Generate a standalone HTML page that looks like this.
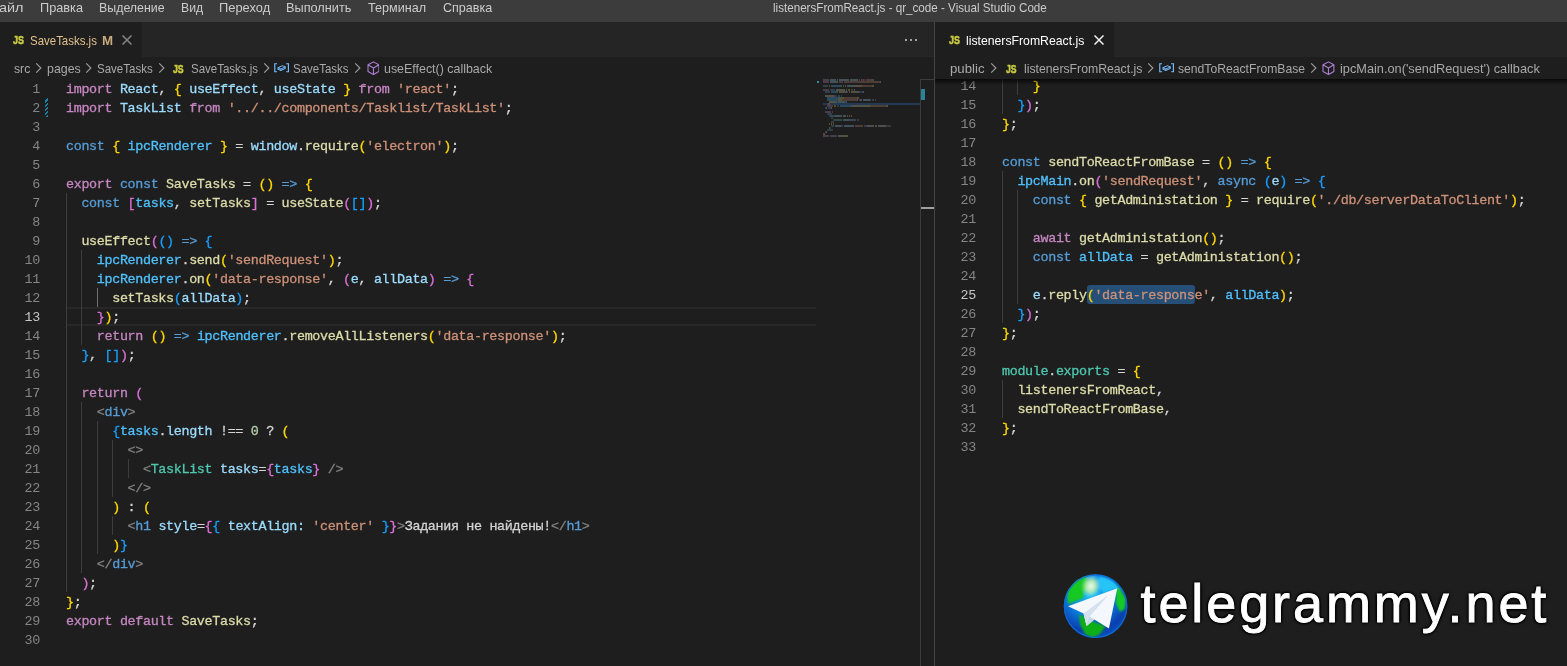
<!DOCTYPE html>
<html><head><meta charset="utf-8"><title>vscode</title>
<style>
html,body{margin:0;padding:0;background:#1e1e1e;}
body{width:1567px;height:666px;position:relative;overflow:hidden;font-family:"Liberation Sans",sans-serif;}
.abs{position:absolute;}
.ui{position:absolute;white-space:pre;font-family:"Liberation Sans",sans-serif;font-size:13px;line-height:16px;color:#ccc;}
.code{position:absolute;white-space:pre;-webkit-text-stroke:0.3px;padding-top:1px;font-family:"Liberation Mono",monospace;font-size:13.4px;letter-spacing:-0.34px;line-height:19px;height:19px;color:#d4d4d4;}
.ln{position:absolute;white-space:pre;padding-top:1px;font-family:"Liberation Mono",monospace;font-size:13.4px;letter-spacing:-0.34px;line-height:19px;height:19px;color:#858585;text-align:right;}
.g{position:absolute;width:1px;background:#3d3d3d;}
.ga{position:absolute;width:1px;background:#707070;}
</style></head><body>
<div id="root" style="position:absolute;left:0;top:0;width:1567px;height:666px;will-change:transform;">


<!-- title bar -->
<div class="abs" style="left:0;top:0;width:1567px;height:22px;background:#3c3c3c;"></div>
<!-- left tab strip -->
<div class="abs" style="left:0;top:22px;width:934px;height:35px;background:#252526;"></div>
<div class="abs" style="left:0;top:22px;width:142px;height:35px;background:#1e1e1e;"></div>
<!-- pane divider -->
<div class="abs" style="left:934px;top:22px;width:1px;height:644px;background:#444444;"></div>
<!-- right tab strip -->
<div class="abs" style="left:935px;top:22px;width:632px;height:35px;background:#252526;"></div>
<div class="abs" style="left:935px;top:22px;width:179px;height:35px;background:#1e1e1e;"></div>

<div class="abs" style="left:66px;top:307px;width:750px;height:15px;border-top:2px solid #282828;border-bottom:2px solid #282828"></div>
<div class="g" style="left:66.0px;top:193px;height:399px"></div>
<div class="g" style="left:81.4px;top:250px;height:95px"></div>
<div class="g" style="left:81.4px;top:402px;height:171px"></div>
<div class="ga" style="left:96.8px;top:288px;height:19px"></div>
<div class="g" style="left:96.8px;top:421px;height:133px"></div>
<div class="g" style="left:112.2px;top:440px;height:57px"></div>
<div class="g" style="left:112.2px;top:516px;height:19px"></div>
<div class="g" style="left:127.6px;top:459px;height:19px"></div>
<div class="g" style="left:1002.0px;top:76px;height:38px"></div>
<div class="g" style="left:1017.4px;top:76px;height:19px"></div>
<div class="g" style="left:1002.0px;top:171px;height:152px"></div>
<div class="g" style="left:1017.4px;top:190px;height:114px"></div>
<div class="g" style="left:1002.0px;top:380px;height:38px"></div>
<div class="abs" style="left:45px;top:98px;width:3px;height:19px;background:repeating-linear-gradient(-45deg,#1b81a8 0 1.5px,#1e1e1e 1.5px 3px)"></div>
<div class="abs" style="left:1087px;top:285px;width:108px;height:19px;background:#264f78;border-radius:3px"></div>
<!-- left code -->
<div class="ln" style="left:0px;top:79px;width:40px;color:#858585">1</div>
<div class="code" style="left:66px;top:79px"><span style="color:#c586c0">import</span> <span style="color:#9cdcfe">React</span><span style="color:#d4d4d4">, </span><span style="color:#ffd700">{</span> <span style="color:#9cdcfe">useEffect</span><span style="color:#d4d4d4">, </span><span style="color:#9cdcfe">useState</span> <span style="color:#ffd700">}</span> <span style="color:#c586c0">from</span> <span style="color:#ce9178">&#x27;react&#x27;</span><span style="color:#d4d4d4">;</span></div>
<div class="ln" style="left:0px;top:98px;width:40px;color:#858585">2</div>
<div class="code" style="left:66px;top:98px"><span style="color:#c586c0">import</span> <span style="color:#9cdcfe">TaskList</span> <span style="color:#c586c0">from</span> <span style="color:#ce9178">&#x27;../../components/Tasklist/TaskList&#x27;</span><span style="color:#d4d4d4">;</span></div>
<div class="ln" style="left:0px;top:117px;width:40px;color:#858585">3</div>
<div class="ln" style="left:0px;top:136px;width:40px;color:#858585">4</div>
<div class="code" style="left:66px;top:136px"><span style="color:#569cd6">const</span> <span style="color:#ffd700">{</span> <span style="color:#4fc1ff">ipcRenderer</span> <span style="color:#ffd700">}</span><span style="color:#d4d4d4"> = </span><span style="color:#9cdcfe">window</span><span style="color:#d4d4d4">.</span><span style="color:#dcdcaa">require</span><span style="color:#ffd700">(</span><span style="color:#ce9178">&#x27;electron&#x27;</span><span style="color:#ffd700">)</span><span style="color:#d4d4d4">;</span></div>
<div class="ln" style="left:0px;top:155px;width:40px;color:#858585">5</div>
<div class="ln" style="left:0px;top:174px;width:40px;color:#858585">6</div>
<div class="code" style="left:66px;top:174px"><span style="color:#c586c0">export</span> <span style="color:#569cd6">const</span> <span style="color:#dcdcaa">SaveTasks</span><span style="color:#d4d4d4"> = </span><span style="color:#ffd700">()</span> <span style="color:#569cd6">=&gt;</span> <span style="color:#ffd700">{</span></div>
<div class="ln" style="left:0px;top:193px;width:40px;color:#858585">7</div>
<div class="code" style="left:66px;top:193px">  <span style="color:#569cd6">const</span> <span style="color:#da70d6">[</span><span style="color:#4fc1ff">tasks</span><span style="color:#d4d4d4">, </span><span style="color:#dcdcaa">setTasks</span><span style="color:#da70d6">]</span><span style="color:#d4d4d4"> = </span><span style="color:#dcdcaa">useState</span><span style="color:#da70d6">(</span><span style="color:#179fff">[]</span><span style="color:#da70d6">)</span><span style="color:#d4d4d4">;</span></div>
<div class="ln" style="left:0px;top:212px;width:40px;color:#858585">8</div>
<div class="ln" style="left:0px;top:231px;width:40px;color:#858585">9</div>
<div class="code" style="left:66px;top:231px">  <span style="color:#dcdcaa">useEffect</span><span style="color:#da70d6">(</span><span style="color:#179fff">()</span> <span style="color:#569cd6">=&gt;</span> <span style="color:#179fff">{</span></div>
<div class="ln" style="left:0px;top:250px;width:40px;color:#858585">10</div>
<div class="code" style="left:66px;top:250px">    <span style="color:#4fc1ff">ipcRenderer</span><span style="color:#d4d4d4">.</span><span style="color:#dcdcaa">send</span><span style="color:#ffd700">(</span><span style="color:#ce9178">&#x27;sendRequest&#x27;</span><span style="color:#ffd700">)</span><span style="color:#d4d4d4">;</span></div>
<div class="ln" style="left:0px;top:269px;width:40px;color:#858585">11</div>
<div class="code" style="left:66px;top:269px">    <span style="color:#4fc1ff">ipcRenderer</span><span style="color:#d4d4d4">.</span><span style="color:#dcdcaa">on</span><span style="color:#ffd700">(</span><span style="color:#ce9178">&#x27;data-response&#x27;</span><span style="color:#d4d4d4">, </span><span style="color:#da70d6">(</span><span style="color:#9cdcfe">e</span><span style="color:#d4d4d4">, </span><span style="color:#9cdcfe">allData</span><span style="color:#da70d6">)</span> <span style="color:#569cd6">=&gt;</span> <span style="color:#da70d6">{</span></div>
<div class="ln" style="left:0px;top:288px;width:40px;color:#858585">12</div>
<div class="code" style="left:66px;top:288px">      <span style="color:#dcdcaa">setTasks</span><span style="color:#179fff">(</span><span style="color:#9cdcfe">allData</span><span style="color:#179fff">)</span><span style="color:#d4d4d4">;</span></div>
<div class="ln" style="left:0px;top:307px;width:40px;color:#c6c6c6">13</div>
<div class="code" style="left:66px;top:307px">    <span style="color:#da70d6">}</span><span style="color:#ffd700">)</span><span style="color:#d4d4d4">;</span></div>
<div class="ln" style="left:0px;top:326px;width:40px;color:#858585">14</div>
<div class="code" style="left:66px;top:326px">    <span style="color:#c586c0">return</span> <span style="color:#ffd700">()</span> <span style="color:#569cd6">=&gt;</span> <span style="color:#4fc1ff">ipcRenderer</span><span style="color:#d4d4d4">.</span><span style="color:#dcdcaa">removeAllListeners</span><span style="color:#ffd700">(</span><span style="color:#ce9178">&#x27;data-response&#x27;</span><span style="color:#ffd700">)</span><span style="color:#d4d4d4">;</span></div>
<div class="ln" style="left:0px;top:345px;width:40px;color:#858585">15</div>
<div class="code" style="left:66px;top:345px">  <span style="color:#179fff">}</span><span style="color:#d4d4d4">, </span><span style="color:#179fff">[]</span><span style="color:#da70d6">)</span><span style="color:#d4d4d4">;</span></div>
<div class="ln" style="left:0px;top:364px;width:40px;color:#858585">16</div>
<div class="ln" style="left:0px;top:383px;width:40px;color:#858585">17</div>
<div class="code" style="left:66px;top:383px">  <span style="color:#c586c0">return</span> <span style="color:#da70d6">(</span></div>
<div class="ln" style="left:0px;top:402px;width:40px;color:#858585">18</div>
<div class="code" style="left:66px;top:402px">    <span style="color:#808080">&lt;</span><span style="color:#569cd6">div</span><span style="color:#808080">&gt;</span></div>
<div class="ln" style="left:0px;top:421px;width:40px;color:#858585">19</div>
<div class="code" style="left:66px;top:421px">      <span style="color:#179fff">{</span><span style="color:#4fc1ff">tasks</span><span style="color:#d4d4d4">.</span><span style="color:#9cdcfe">length</span><span style="color:#d4d4d4"> !== </span><span style="color:#b5cea8">0</span><span style="color:#d4d4d4"> ? </span><span style="color:#ffd700">(</span></div>
<div class="ln" style="left:0px;top:440px;width:40px;color:#858585">20</div>
<div class="code" style="left:66px;top:440px">        <span style="color:#808080">&lt;&gt;</span></div>
<div class="ln" style="left:0px;top:459px;width:40px;color:#858585">21</div>
<div class="code" style="left:66px;top:459px">          <span style="color:#808080">&lt;</span><span style="color:#4ec9b0">TaskList</span> <span style="color:#9cdcfe">tasks</span><span style="color:#d4d4d4">=</span><span style="color:#da70d6">{</span><span style="color:#4fc1ff">tasks</span><span style="color:#da70d6">}</span> <span style="color:#808080">/&gt;</span></div>
<div class="ln" style="left:0px;top:478px;width:40px;color:#858585">22</div>
<div class="code" style="left:66px;top:478px">        <span style="color:#808080">&lt;/&gt;</span></div>
<div class="ln" style="left:0px;top:497px;width:40px;color:#858585">23</div>
<div class="code" style="left:66px;top:497px">      <span style="color:#ffd700">)</span><span style="color:#d4d4d4"> : </span><span style="color:#ffd700">(</span></div>
<div class="ln" style="left:0px;top:516px;width:40px;color:#858585">24</div>
<div class="code" style="left:66px;top:516px">        <span style="color:#808080">&lt;</span><span style="color:#569cd6">h1</span> <span style="color:#9cdcfe">style</span><span style="color:#d4d4d4">=</span><span style="color:#da70d6">{</span><span style="color:#179fff">{</span> <span style="color:#9cdcfe">textAlign</span><span style="color:#9cdcfe">:</span> <span style="color:#ce9178">&#x27;center&#x27;</span> <span style="color:#179fff">}</span><span style="color:#da70d6">}</span><span style="color:#808080">&gt;</span><span style="color:#d4d4d4">Задания не найдены!</span><span style="color:#808080">&lt;/</span><span style="color:#569cd6">h1</span><span style="color:#808080">&gt;</span></div>
<div class="ln" style="left:0px;top:535px;width:40px;color:#858585">25</div>
<div class="code" style="left:66px;top:535px">      <span style="color:#ffd700">)</span><span style="color:#179fff">}</span></div>
<div class="ln" style="left:0px;top:554px;width:40px;color:#858585">26</div>
<div class="code" style="left:66px;top:554px">    <span style="color:#808080">&lt;/</span><span style="color:#569cd6">div</span><span style="color:#808080">&gt;</span></div>
<div class="ln" style="left:0px;top:573px;width:40px;color:#858585">27</div>
<div class="code" style="left:66px;top:573px">  <span style="color:#da70d6">)</span><span style="color:#d4d4d4">;</span></div>
<div class="ln" style="left:0px;top:592px;width:40px;color:#858585">28</div>
<div class="code" style="left:66px;top:592px"><span style="color:#ffd700">}</span><span style="color:#d4d4d4">;</span></div>
<div class="ln" style="left:0px;top:611px;width:40px;color:#858585">29</div>
<div class="code" style="left:66px;top:611px"><span style="color:#c586c0">export</span> <span style="color:#c586c0">default</span> <span style="color:#dcdcaa">SaveTasks</span><span style="color:#d4d4d4">;</span></div>
<div class="ln" style="left:0px;top:630px;width:40px;color:#858585">30</div>
<!-- right code -->
<div class="ln" style="left:936px;top:76px;width:40px;color:#858585">14</div>
<div class="code" style="left:1002px;top:76px">    <span style="color:#ffd700">}</span></div>
<div class="ln" style="left:936px;top:95px;width:40px;color:#858585">15</div>
<div class="code" style="left:1002px;top:95px">  <span style="color:#179fff">}</span><span style="color:#da70d6">)</span><span style="color:#d4d4d4">;</span></div>
<div class="ln" style="left:936px;top:114px;width:40px;color:#858585">16</div>
<div class="code" style="left:1002px;top:114px"><span style="color:#ffd700">}</span><span style="color:#d4d4d4">;</span></div>
<div class="ln" style="left:936px;top:133px;width:40px;color:#858585">17</div>
<div class="ln" style="left:936px;top:152px;width:40px;color:#858585">18</div>
<div class="code" style="left:1002px;top:152px"><span style="color:#569cd6">const</span> <span style="color:#dcdcaa">sendToReactFromBase</span><span style="color:#d4d4d4"> = </span><span style="color:#ffd700">()</span> <span style="color:#569cd6">=&gt;</span> <span style="color:#ffd700">{</span></div>
<div class="ln" style="left:936px;top:171px;width:40px;color:#858585">19</div>
<div class="code" style="left:1002px;top:171px">  <span style="color:#4fc1ff">ipcMain</span><span style="color:#d4d4d4">.</span><span style="color:#dcdcaa">on</span><span style="color:#da70d6">(</span><span style="color:#ce9178">&#x27;sendRequest&#x27;</span><span style="color:#d4d4d4">, </span><span style="color:#569cd6">async</span> <span style="color:#179fff">(</span><span style="color:#9cdcfe">e</span><span style="color:#179fff">)</span> <span style="color:#569cd6">=&gt;</span> <span style="color:#179fff">{</span></div>
<div class="ln" style="left:936px;top:190px;width:40px;color:#858585">20</div>
<div class="code" style="left:1002px;top:190px">    <span style="color:#569cd6">const</span> <span style="color:#ffd700">{</span> <span style="color:#dcdcaa">getAdministation</span> <span style="color:#ffd700">}</span><span style="color:#d4d4d4"> = </span><span style="color:#dcdcaa">require</span><span style="color:#ffd700">(</span><span style="color:#ce9178">&#x27;./db/serverDataToClient&#x27;</span><span style="color:#ffd700">)</span><span style="color:#d4d4d4">;</span></div>
<div class="ln" style="left:936px;top:209px;width:40px;color:#858585">21</div>
<div class="ln" style="left:936px;top:228px;width:40px;color:#858585">22</div>
<div class="code" style="left:1002px;top:228px">    <span style="color:#c586c0">await</span> <span style="color:#dcdcaa">getAdministation</span><span style="color:#ffd700">()</span><span style="color:#d4d4d4">;</span></div>
<div class="ln" style="left:936px;top:247px;width:40px;color:#858585">23</div>
<div class="code" style="left:1002px;top:247px">    <span style="color:#569cd6">const</span> <span style="color:#4fc1ff">allData</span><span style="color:#d4d4d4"> = </span><span style="color:#dcdcaa">getAdministation</span><span style="color:#ffd700">()</span><span style="color:#d4d4d4">;</span></div>
<div class="ln" style="left:936px;top:266px;width:40px;color:#858585">24</div>
<div class="ln" style="left:936px;top:285px;width:40px;color:#c6c6c6">25</div>
<div class="code" style="left:1002px;top:285px">    <span style="color:#9cdcfe">e</span><span style="color:#d4d4d4">.</span><span style="color:#dcdcaa">reply</span><span style="color:#ffd700">(</span><span style="color:#ce9178">&#x27;data-response&#x27;</span><span style="color:#d4d4d4">, </span><span style="color:#4fc1ff">allData</span><span style="color:#ffd700">)</span><span style="color:#d4d4d4">;</span></div>
<div class="ln" style="left:936px;top:304px;width:40px;color:#858585">26</div>
<div class="code" style="left:1002px;top:304px">  <span style="color:#179fff">}</span><span style="color:#da70d6">)</span><span style="color:#d4d4d4">;</span></div>
<div class="ln" style="left:936px;top:323px;width:40px;color:#858585">27</div>
<div class="code" style="left:1002px;top:323px"><span style="color:#ffd700">}</span><span style="color:#d4d4d4">;</span></div>
<div class="ln" style="left:936px;top:342px;width:40px;color:#858585">28</div>
<div class="ln" style="left:936px;top:361px;width:40px;color:#858585">29</div>
<div class="code" style="left:1002px;top:361px"><span style="color:#4ec9b0">module</span><span style="color:#d4d4d4">.</span><span style="color:#4ec9b0">exports</span><span style="color:#d4d4d4"> = </span><span style="color:#ffd700">{</span></div>
<div class="ln" style="left:936px;top:380px;width:40px;color:#858585">30</div>
<div class="code" style="left:1002px;top:380px">  <span style="color:#dcdcaa">listenersFromReact</span><span style="color:#d4d4d4">,</span></div>
<div class="ln" style="left:936px;top:399px;width:40px;color:#858585">31</div>
<div class="code" style="left:1002px;top:399px">  <span style="color:#dcdcaa">sendToReactFromBase</span><span style="color:#d4d4d4">,</span></div>
<div class="ln" style="left:936px;top:418px;width:40px;color:#858585">32</div>
<div class="code" style="left:1002px;top:418px"><span style="color:#ffd700">}</span><span style="color:#d4d4d4">;</span></div>
<div class="ln" style="left:936px;top:437px;width:40px;color:#858585">33</div>
<div class="abs" style="left:935px;top:57px;width:632px;height:22px;background:#1e1e1e"></div>
<div class="ui" style="left:-1.50px;top:-0.00px;font-size:13px;color:#cccccc;font-weight:400;transform:scaleX(1.1097);transform-origin:0 0">айл</div>
<div class="ui" style="left:39.50px;top:-0.00px;font-size:13px;color:#cccccc;font-weight:400;transform:scaleX(0.9790);transform-origin:0 0">Правка</div>
<div class="ui" style="left:99.20px;top:-0.50px;font-size:13px;color:#cccccc;font-weight:400;transform:scaleX(0.9522);transform-origin:0 0">Выделение</div>
<div class="ui" style="left:181.20px;top:-0.50px;font-size:13px;color:#cccccc;font-weight:400;transform:scaleX(0.9392);transform-origin:0 0">Вид</div>
<div class="ui" style="left:219.30px;top:-0.50px;font-size:13px;color:#cccccc;font-weight:400;transform:scaleX(0.9915);transform-origin:0 0">Переход</div>
<div class="ui" style="left:286.40px;top:-0.50px;font-size:13px;color:#cccccc;font-weight:400;transform:scaleX(0.9795);transform-origin:0 0">Выполнить</div>
<div class="ui" style="left:368.40px;top:-0.50px;font-size:13px;color:#cccccc;font-weight:400;transform:scaleX(0.9704);transform-origin:0 0">Терминал</div>
<div class="ui" style="left:443.00px;top:-0.50px;font-size:13px;color:#cccccc;font-weight:400;transform:scaleX(0.9647);transform-origin:0 0">Справка</div>
<div class="ui" style="left:772.90px;top:-0.00px;font-size:13px;color:#cccccc;font-weight:400;transform:scaleX(0.8944);transform-origin:0 0">listenersFromReact.js - qr_code - Visual Studio Code</div>
<div class="ui" style="left:12.80px;top:31.59px;font-size:11px;color:#cbcb41;font-weight:700;transform:scaleX(0.8093);transform-origin:0 0;-webkit-text-stroke:0.55px #cbcb41">JS</div>
<div class="ui" style="left:30.10px;top:33.00px;font-size:13px;color:#e2c08d;font-weight:400;transform:scaleX(0.8817);transform-origin:0 0">SaveTasks.js</div>
<div class="ui" style="left:102.40px;top:33.00px;font-size:13px;color:#c9ab7e;font-weight:700;transform:scaleX(1.0236);transform-origin:0 0">M</div>
<div class="ui" style="left:13.80px;top:61.00px;font-size:13px;color:#a9a9a9;font-weight:400;transform:scaleX(0.9398);transform-origin:0 0">src</div>
<div class="ui" style="left:46.50px;top:61.00px;font-size:13px;color:#a9a9a9;font-weight:400;transform:scaleX(0.9514);transform-origin:0 0">pages</div>
<div class="ui" style="left:96.50px;top:61.00px;font-size:13px;color:#a9a9a9;font-weight:400;transform:scaleX(0.8859);transform-origin:0 0">SaveTasks</div>
<div class="ui" style="left:173.20px;top:60.59px;font-size:11px;color:#cbcb41;font-weight:700;transform:scaleX(0.7870);transform-origin:0 0;-webkit-text-stroke:0.55px #cbcb41">JS</div>
<div class="ui" style="left:190.80px;top:61.00px;font-size:13px;color:#a9a9a9;font-weight:400;transform:scaleX(0.8843);transform-origin:0 0">SaveTasks.js</div>
<div class="ui" style="left:293.00px;top:61.00px;font-size:13px;color:#a9a9a9;font-weight:400;transform:scaleX(0.8827);transform-origin:0 0">SaveTasks</div>
<div class="ui" style="left:384.00px;top:61.00px;font-size:13px;color:#a9a9a9;font-weight:400;transform:scaleX(0.9558);transform-origin:0 0">useEffect() callback</div>
<div class="ui" style="left:948.50px;top:31.59px;font-size:11px;color:#cbcb41;font-weight:700;transform:scaleX(0.8019);transform-origin:0 0;-webkit-text-stroke:0.55px #cbcb41">JS</div>
<div class="ui" style="left:966.40px;top:33.00px;font-size:13px;color:#ffffff;font-weight:400;transform:scaleX(0.9411);transform-origin:0 0">listenersFromReact.js</div>
<div class="ui" style="left:950.40px;top:61.00px;font-size:13px;color:#a9a9a9;font-weight:400;transform:scaleX(1.0156);transform-origin:0 0">public</div>
<div class="ui" style="left:1005.90px;top:60.59px;font-size:11px;color:#cbcb41;font-weight:700;transform:scaleX(0.7796);transform-origin:0 0;-webkit-text-stroke:0.55px #cbcb41">JS</div>
<div class="ui" style="left:1023.50px;top:61.00px;font-size:13px;color:#a9a9a9;font-weight:400;transform:scaleX(0.9419);transform-origin:0 0">listenersFromReact.js</div>
<div class="ui" style="left:1177.90px;top:61.00px;font-size:13px;color:#a9a9a9;font-weight:400;transform:scaleX(0.9356);transform-origin:0 0">sendToReactFromBase</div>
<div class="ui" style="left:1340.40px;top:61.00px;font-size:13px;color:#a9a9a9;font-weight:400;transform:scaleX(0.9809);transform-origin:0 0">ipcMain.on(&#x27;sendRequest&#x27;) callback</div>
<svg class="abs" style="left:34.7px;top:62.0px" width="8" height="12" viewBox="0 0 8 12"><path d="M1.2 1.3 L5.9 6 L1.2 10.7" fill="none" stroke="#a0a0a0" stroke-width="1.1"/></svg>
<svg class="abs" style="left:85.3px;top:62.0px" width="8" height="12" viewBox="0 0 8 12"><path d="M1.2 1.3 L5.9 6 L1.2 10.7" fill="none" stroke="#a0a0a0" stroke-width="1.1"/></svg>
<svg class="abs" style="left:157.5px;top:62.0px" width="8" height="12" viewBox="0 0 8 12"><path d="M1.2 1.3 L5.9 6 L1.2 10.7" fill="none" stroke="#a0a0a0" stroke-width="1.1"/></svg>
<svg class="abs" style="left:262.6px;top:62.0px" width="8" height="12" viewBox="0 0 8 12"><path d="M1.2 1.3 L5.9 6 L1.2 10.7" fill="none" stroke="#a0a0a0" stroke-width="1.1"/></svg>
<svg class="abs" style="left:353.6px;top:62.0px" width="8" height="12" viewBox="0 0 8 12"><path d="M1.2 1.3 L5.9 6 L1.2 10.7" fill="none" stroke="#a0a0a0" stroke-width="1.1"/></svg>
<svg class="abs" style="left:989.6px;top:62.0px" width="8" height="12" viewBox="0 0 8 12"><path d="M1.2 1.3 L5.9 6 L1.2 10.7" fill="none" stroke="#a0a0a0" stroke-width="1.1"/></svg>
<svg class="abs" style="left:1147.3px;top:62.0px" width="8" height="12" viewBox="0 0 8 12"><path d="M1.2 1.3 L5.9 6 L1.2 10.7" fill="none" stroke="#a0a0a0" stroke-width="1.1"/></svg>
<svg class="abs" style="left:1309.8px;top:62.0px" width="8" height="12" viewBox="0 0 8 12"><path d="M1.2 1.3 L5.9 6 L1.2 10.7" fill="none" stroke="#a0a0a0" stroke-width="1.1"/></svg>
<svg class="abs" style="left:823px;top:79px" width="98" height="62" viewBox="0 0 98 62" shape-rendering="crispEdges"><rect x="0" y="24" width="98" height="2" fill="#223a55"/><rect x="19" y="20" width="15" height="2" fill="#6a4a38"/><rect x="4" y="20" width="15" height="2" fill="#27507a"/><rect x="0" y="0" width="6" height="2" fill="#4b3a4a"/><rect x="7" y="0" width="5" height="2" fill="#40515a"/><rect x="12" y="0" width="1" height="2" fill="#4f4f4f"/><rect x="14" y="0" width="1" height="2" fill="#5b5016"/><rect x="16" y="0" width="9" height="2" fill="#40515a"/><rect x="25" y="0" width="1" height="2" fill="#4f4f4f"/><rect x="27" y="0" width="8" height="2" fill="#40515a"/><rect x="36" y="0" width="1" height="2" fill="#5b5016"/><rect x="38" y="0" width="4" height="2" fill="#4b3a4a"/><rect x="43" y="0" width="7" height="2" fill="#4e3d36"/><rect x="50" y="0" width="1" height="2" fill="#4f4f4f"/><rect x="0" y="2" width="6" height="2" fill="#4b3a4a"/><rect x="7" y="2" width="8" height="2" fill="#40515a"/><rect x="16" y="2" width="4" height="2" fill="#4b3a4a"/><rect x="21" y="2" width="36" height="2" fill="#4e3d36"/><rect x="57" y="2" width="1" height="2" fill="#4f4f4f"/><rect x="0" y="6" width="5" height="2" fill="#2d4050"/><rect x="6" y="6" width="1" height="2" fill="#5b5016"/><rect x="8" y="6" width="11" height="2" fill="#2b4a5b"/><rect x="20" y="6" width="1" height="2" fill="#5b5016"/><rect x="22" y="6" width="1" height="2" fill="#4f4f4f"/><rect x="24" y="6" width="6" height="2" fill="#40515a"/><rect x="30" y="6" width="1" height="2" fill="#4f4f4f"/><rect x="31" y="6" width="7" height="2" fill="#515144"/><rect x="38" y="6" width="1" height="2" fill="#5b5016"/><rect x="39" y="6" width="10" height="2" fill="#4e3d36"/><rect x="49" y="6" width="1" height="2" fill="#5b5016"/><rect x="50" y="6" width="1" height="2" fill="#4f4f4f"/><rect x="0" y="10" width="6" height="2" fill="#4b3a4a"/><rect x="7" y="10" width="5" height="2" fill="#2d4050"/><rect x="13" y="10" width="9" height="2" fill="#515144"/><rect x="23" y="10" width="1" height="2" fill="#4f4f4f"/><rect x="25" y="10" width="2" height="2" fill="#5b5016"/><rect x="28" y="10" width="2" height="2" fill="#2d4050"/><rect x="31" y="10" width="1" height="2" fill="#5b5016"/><rect x="2" y="12" width="5" height="2" fill="#2d4050"/><rect x="8" y="12" width="1" height="2" fill="#513450"/><rect x="9" y="12" width="5" height="2" fill="#2b4a5b"/><rect x="14" y="12" width="1" height="2" fill="#4f4f4f"/><rect x="16" y="12" width="8" height="2" fill="#515144"/><rect x="24" y="12" width="1" height="2" fill="#513450"/><rect x="26" y="12" width="1" height="2" fill="#4f4f4f"/><rect x="28" y="12" width="8" height="2" fill="#515144"/><rect x="36" y="12" width="1" height="2" fill="#513450"/><rect x="37" y="12" width="2" height="2" fill="#1c415b"/><rect x="39" y="12" width="1" height="2" fill="#513450"/><rect x="40" y="12" width="1" height="2" fill="#4f4f4f"/><rect x="2" y="16" width="9" height="2" fill="#515144"/><rect x="11" y="16" width="1" height="2" fill="#513450"/><rect x="12" y="16" width="2" height="2" fill="#1c415b"/><rect x="15" y="16" width="2" height="2" fill="#2d4050"/><rect x="18" y="16" width="1" height="2" fill="#1c415b"/><rect x="4" y="18" width="11" height="2" fill="#2b4a5b"/><rect x="15" y="18" width="1" height="2" fill="#4f4f4f"/><rect x="16" y="18" width="4" height="2" fill="#515144"/><rect x="20" y="18" width="1" height="2" fill="#5b5016"/><rect x="21" y="18" width="13" height="2" fill="#4e3d36"/><rect x="34" y="18" width="1" height="2" fill="#5b5016"/><rect x="35" y="18" width="1" height="2" fill="#4f4f4f"/><rect x="4" y="20" width="11" height="2" fill="#2b4a5b"/><rect x="15" y="20" width="1" height="2" fill="#4f4f4f"/><rect x="16" y="20" width="2" height="2" fill="#515144"/><rect x="18" y="20" width="1" height="2" fill="#5b5016"/><rect x="19" y="20" width="15" height="2" fill="#4e3d36"/><rect x="34" y="20" width="1" height="2" fill="#4f4f4f"/><rect x="36" y="20" width="1" height="2" fill="#513450"/><rect x="37" y="20" width="1" height="2" fill="#40515a"/><rect x="38" y="20" width="1" height="2" fill="#4f4f4f"/><rect x="40" y="20" width="7" height="2" fill="#40515a"/><rect x="47" y="20" width="1" height="2" fill="#513450"/><rect x="49" y="20" width="2" height="2" fill="#2d4050"/><rect x="52" y="20" width="1" height="2" fill="#513450"/><rect x="6" y="22" width="8" height="2" fill="#515144"/><rect x="14" y="22" width="1" height="2" fill="#1c415b"/><rect x="15" y="22" width="7" height="2" fill="#40515a"/><rect x="22" y="22" width="1" height="2" fill="#1c415b"/><rect x="23" y="22" width="1" height="2" fill="#4f4f4f"/><rect x="4" y="24" width="1" height="2" fill="#513450"/><rect x="5" y="24" width="1" height="2" fill="#5b5016"/><rect x="6" y="24" width="1" height="2" fill="#4f4f4f"/><rect x="4" y="26" width="6" height="2" fill="#4b3a4a"/><rect x="11" y="26" width="2" height="2" fill="#5b5016"/><rect x="14" y="26" width="2" height="2" fill="#2d4050"/><rect x="17" y="26" width="11" height="2" fill="#2b4a5b"/><rect x="28" y="26" width="1" height="2" fill="#4f4f4f"/><rect x="29" y="26" width="18" height="2" fill="#515144"/><rect x="47" y="26" width="1" height="2" fill="#5b5016"/><rect x="48" y="26" width="15" height="2" fill="#4e3d36"/><rect x="63" y="26" width="1" height="2" fill="#5b5016"/><rect x="64" y="26" width="1" height="2" fill="#4f4f4f"/><rect x="2" y="28" width="1" height="2" fill="#1c415b"/><rect x="3" y="28" width="1" height="2" fill="#4f4f4f"/><rect x="5" y="28" width="2" height="2" fill="#1c415b"/><rect x="7" y="28" width="1" height="2" fill="#513450"/><rect x="8" y="28" width="1" height="2" fill="#4f4f4f"/><rect x="2" y="32" width="6" height="2" fill="#4b3a4a"/><rect x="9" y="32" width="1" height="2" fill="#513450"/><rect x="4" y="34" width="1" height="2" fill="#383838"/><rect x="5" y="34" width="3" height="2" fill="#2d4050"/><rect x="8" y="34" width="1" height="2" fill="#383838"/><rect x="6" y="36" width="1" height="2" fill="#1c415b"/><rect x="7" y="36" width="5" height="2" fill="#2b4a5b"/><rect x="12" y="36" width="1" height="2" fill="#4f4f4f"/><rect x="13" y="36" width="6" height="2" fill="#40515a"/><rect x="20" y="36" width="3" height="2" fill="#4f4f4f"/><rect x="24" y="36" width="1" height="2" fill="#474e43"/><rect x="26" y="36" width="1" height="2" fill="#4f4f4f"/><rect x="28" y="36" width="1" height="2" fill="#5b5016"/><rect x="8" y="38" width="2" height="2" fill="#383838"/><rect x="10" y="40" width="1" height="2" fill="#383838"/><rect x="11" y="40" width="8" height="2" fill="#2b4c45"/><rect x="20" y="40" width="5" height="2" fill="#40515a"/><rect x="25" y="40" width="1" height="2" fill="#4f4f4f"/><rect x="26" y="40" width="1" height="2" fill="#513450"/><rect x="27" y="40" width="5" height="2" fill="#2b4a5b"/><rect x="32" y="40" width="1" height="2" fill="#513450"/><rect x="34" y="40" width="2" height="2" fill="#383838"/><rect x="8" y="42" width="3" height="2" fill="#383838"/><rect x="6" y="44" width="1" height="2" fill="#5b5016"/><rect x="8" y="44" width="1" height="2" fill="#4f4f4f"/><rect x="10" y="44" width="1" height="2" fill="#5b5016"/><rect x="8" y="46" width="1" height="2" fill="#383838"/><rect x="9" y="46" width="2" height="2" fill="#2d4050"/><rect x="12" y="46" width="5" height="2" fill="#40515a"/><rect x="17" y="46" width="1" height="2" fill="#4f4f4f"/><rect x="18" y="46" width="1" height="2" fill="#513450"/><rect x="19" y="46" width="1" height="2" fill="#1c415b"/><rect x="21" y="46" width="9" height="2" fill="#40515a"/><rect x="30" y="46" width="1" height="2" fill="#40515a"/><rect x="32" y="46" width="8" height="2" fill="#4e3d36"/><rect x="41" y="46" width="1" height="2" fill="#1c415b"/><rect x="42" y="46" width="1" height="2" fill="#513450"/><rect x="43" y="46" width="1" height="2" fill="#383838"/><rect x="44" y="46" width="7" height="2" fill="#4f4f4f"/><rect x="52" y="46" width="2" height="2" fill="#4f4f4f"/><rect x="55" y="46" width="8" height="2" fill="#4f4f4f"/><rect x="63" y="46" width="2" height="2" fill="#383838"/><rect x="65" y="46" width="2" height="2" fill="#2d4050"/><rect x="67" y="46" width="1" height="2" fill="#383838"/><rect x="6" y="48" width="1" height="2" fill="#5b5016"/><rect x="7" y="48" width="1" height="2" fill="#1c415b"/><rect x="4" y="50" width="2" height="2" fill="#383838"/><rect x="6" y="50" width="3" height="2" fill="#2d4050"/><rect x="9" y="50" width="1" height="2" fill="#383838"/><rect x="2" y="52" width="1" height="2" fill="#513450"/><rect x="3" y="52" width="1" height="2" fill="#4f4f4f"/><rect x="0" y="54" width="1" height="2" fill="#5b5016"/><rect x="1" y="54" width="1" height="2" fill="#4f4f4f"/><rect x="0" y="56" width="6" height="2" fill="#4b3a4a"/><rect x="7" y="56" width="7" height="2" fill="#4b3a4a"/><rect x="15" y="56" width="9" height="2" fill="#515144"/><rect x="24" y="56" width="1" height="2" fill="#4f4f4f"/></svg>
<div class="abs" style="left:817px;top:81px;width:2px;height:2px;background:#3a86ab"></div>
<div class="abs" style="left:920px;top:79px;width:14px;height:587px;border-left:1px solid #3c3c3c;border-top:1px solid #3c3c3c;box-sizing:border-box"></div>
<div class="abs" style="left:921px;top:89px;width:4px;height:11px;background:#2a8499"></div>
<div class="abs" style="left:921px;top:207px;width:13px;height:2px;background:#a0a0a0"></div>
<div class="abs" style="left:935px;top:79px;width:632px;height:6px;background:linear-gradient(#000000b0,#00000000)"></div>
<div class="abs" style="left:905.0px;top:39px;width:2px;height:2px;background:#cccccc;border-radius:1px"></div>
<div class="abs" style="left:910.0px;top:39px;width:2px;height:2px;background:#cccccc;border-radius:1px"></div>
<div class="abs" style="left:915.0px;top:39px;width:2px;height:2px;background:#cccccc;border-radius:1px"></div>
<svg class="abs" style="left:122.2px;top:35.1px" width="10" height="10" viewBox="0 0 10 10"><path d="M0.5 0.5 L9.5 9.5 M9.5 0.5 L0.5 9.5" stroke="#858585" stroke-width="1.5" fill="none"/></svg>
<svg class="abs" style="left:1094.4px;top:35.1px" width="10" height="10" viewBox="0 0 10 10"><path d="M0.5 0.5 L9.5 9.5 M9.5 0.5 L0.5 9.5" stroke="#f0f0f0" stroke-width="1.5" fill="none"/></svg>
<svg class="abs" style="left:274.1px;top:63.3px" width="15.2" height="9.8" viewBox="0 0 16 11" preserveAspectRatio="none"><path d="M3.2 0.8 H0.8 V9.8 H3.2 M12.8 0.8 H15.2 V9.8 H12.8" fill="none" stroke="#75beff" stroke-width="1.2"/><path d="M4.2 5.3 L8.8 3 L11.8 4.4 L11.8 6 L7.2 8.3 L4.2 6.9 Z" fill="none" stroke="#75beff" stroke-width="1.1"/><path d="M4.2 5.3 L7.2 6.7 L11.8 4.4 M7.2 6.7 V8.3" fill="none" stroke="#75beff" stroke-width="1"/></svg>
<svg class="abs" style="left:366.5px;top:60.6px" width="12.9" height="14.4" viewBox="0 0 14 15" preserveAspectRatio="none"><path d="M7 0.9 L12.9 4 V11 L7 14.1 L1.1 11 V4 Z M1.1 4 L7 7.2 L12.9 4 M7 7.2 V14.1" fill="none" stroke="#b180d7" stroke-width="1.15" stroke-linejoin="round"/></svg>
<svg class="abs" style="left:1159.2px;top:63.3px" width="15.2" height="9.8" viewBox="0 0 16 11" preserveAspectRatio="none"><path d="M3.2 0.8 H0.8 V9.8 H3.2 M12.8 0.8 H15.2 V9.8 H12.8" fill="none" stroke="#75beff" stroke-width="1.2"/><path d="M4.2 5.3 L8.8 3 L11.8 4.4 L11.8 6 L7.2 8.3 L4.2 6.9 Z" fill="none" stroke="#75beff" stroke-width="1.1"/><path d="M4.2 5.3 L7.2 6.7 L11.8 4.4 M7.2 6.7 V8.3" fill="none" stroke="#75beff" stroke-width="1"/></svg>
<svg class="abs" style="left:1322.4px;top:60.6px" width="12.9" height="14.4" viewBox="0 0 14 15" preserveAspectRatio="none"><path d="M7 0.9 L12.9 4 V11 L7 14.1 L1.1 11 V4 Z M1.1 4 L7 7.2 L12.9 4 M7 7.2 V14.1" fill="none" stroke="#b180d7" stroke-width="1.15" stroke-linejoin="round"/></svg>
<svg class="abs" style="left:1056px;top:566px" width="80" height="80" viewBox="0 0 80 80">
<defs>
<radialGradient id="gl" cx="42%" cy="30%" r="75%"><stop offset="0" stop-color="#1fc4f4"/><stop offset="0.45" stop-color="#0a7fe0"/><stop offset="0.8" stop-color="#0a3fae"/><stop offset="1" stop-color="#0b55c4"/></radialGradient>
<radialGradient id="hl" cx="50%" cy="50%" r="50%"><stop offset="0" stop-color="#ffffff" stop-opacity="0.95"/><stop offset="0.5" stop-color="#e8ff90" stop-opacity="0.7"/><stop offset="1" stop-color="#8fe8ff" stop-opacity="0"/></radialGradient>
<clipPath id="gc"><circle cx="39.6" cy="40.2" r="31.8"/></clipPath>
<filter id="bl" x="-20%" y="-20%" width="140%" height="140%"><feGaussianBlur stdDeviation="0.8"/></filter>
</defs>
<circle cx="39.6" cy="40.2" r="31.8" fill="url(#gl)"/>
<g clip-path="url(#gc)" filter="url(#bl)">
<path d="M11 24 L18 13 L31 9 L30 20 L27 32 L20 35 L12 38 Z" fill="#14c822"/>
<path d="M57 16 L64 22 L70 33 L69 43 L64 46 L60 38 L60 26 Z" fill="#12c926"/>
<path d="M23 48 L30 52 L38 56 L50 60 L44 68 L36 72 L29 68 L24 58 Z" fill="#0fae18"/>
<ellipse cx="35" cy="20" rx="10" ry="12" transform="rotate(15 35 20)" fill="url(#hl)"/>
<path d="M43 11 Q56 11 63 22 L48 27 L42 20 Z" fill="#25c4f6"/>
</g>
<circle cx="39.6" cy="40.2" r="31.2" fill="none" stroke="#0c6fd8" stroke-width="1.4" opacity="0.8"/>
<path d="M12 40.2 L61.3 22.2 L52.9 62.5 L38.4 53.5 L30.6 60.1 L27.6 47.4 Z" fill="#f4f7fb"/>
<path d="M27.6 47.4 L30.6 60.1 L33.5 50.5 Z" fill="#b9cfe4"/>
<path d="M27.6 47.4 L53 28.5 L33.5 50.5 L30.6 60.1 Z" fill="#d4e1ee"/>
<path d="M33.5 50.5 L38.4 53.5 L30.6 60.1 Z" fill="#c4d6e8"/>
</svg>
<div class="abs" style="left:1140.5px;top:573px;font-family:'Liberation Sans',sans-serif;font-size:54px;line-height:60px;letter-spacing:2.9px;color:#ffffff;white-space:pre;-webkit-text-stroke:0.9px #ffffff;text-shadow:0 0 2px #000,0 0 3px #000,0 0 4px #000,1px 1px 2px #000,-1px -1px 2px #000,1px -1px 2px #000,-1px 1px 2px #000" id="wm">telegrammy.net</div>

</div>
</body></html>
